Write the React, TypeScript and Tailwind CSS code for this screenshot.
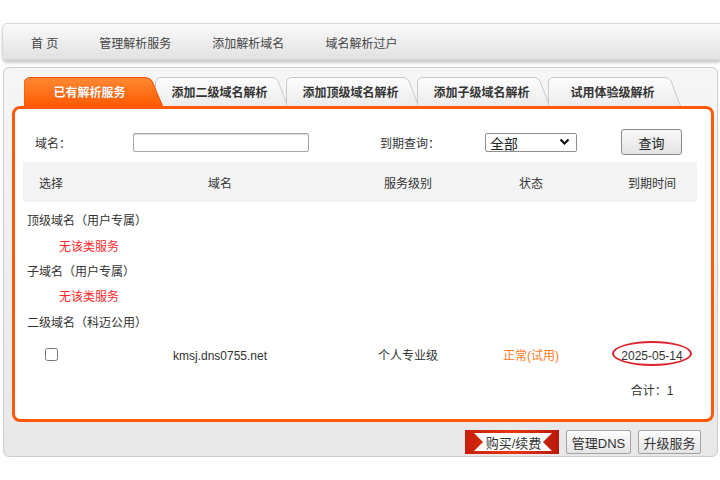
import React from 'react';

const navItems = ['首 页', '管理解析服务', '添加解析域名', '域名解析过户'];
const tabs = ['添加二级域名解析', '添加顶级域名解析', '添加子级域名解析', '试用体验级解析'];

function ActiveTab({ label }: { label: string }) {
  return (
    <div className="relative z-10 h-[30px] w-[139px] shrink-0">
      <svg className="absolute inset-0" width="139" height="30" viewBox="0 0 139 30">
        <defs>
          <linearGradient id="tabActive" x1="0" y1="0" x2="0" y2="1">
            <stop offset="0" stopColor="#ff8a33" />
            <stop offset="1" stopColor="#ff5800" />
          </linearGradient>
        </defs>
        <path d="M0 30 V7 Q0 0.5 7 0.5 H121 Q126 0.5 128 4 L139 30 Z" fill="url(#tabActive)" stroke="#f05000" strokeWidth="1" />
      </svg>
      <div className="relative flex h-[29px] items-center justify-center pr-[8px] pt-[3px] text-[12px] font-bold text-white [text-shadow:0_0_1px_rgba(160,50,0,0.6)]">
        {label}
      </div>
    </div>
  );
}

function Tab({ label, first }: { label: string; first?: boolean }) {
  return (
    <div className={first ? 'relative -ml-[8px] h-[29px] w-[133px] shrink-0' : 'relative -ml-[2px] h-[29px] w-[133px] shrink-0'}>
      <svg className="absolute inset-0" width="133" height="29" viewBox="0 0 133 29">
        <defs>
          <linearGradient id="tabIdle" x1="0" y1="0" x2="0" y2="1">
            <stop offset="0" stopColor="#fdfdfd" />
            <stop offset="1" stopColor="#ececec" />
          </linearGradient>
        </defs>
        <path d="M0.5 29 V6 Q0.5 0.5 6 0.5 H117 Q121 0.5 123 4 L132.5 29" fill="url(#tabIdle)" stroke="#c9c9c9" strokeWidth="1" />
      </svg>
      <div className="relative flex h-full items-center justify-center pr-[4px] pt-[3px] text-[12px] font-bold text-[#333]">
        {label}
      </div>
    </div>
  );
}

function GrayButton({ children, className }: { children: React.ReactNode; className: string }) {
  return (
    <div
      className={`flex h-[24px] items-center justify-center rounded-[2px] border border-[#a3a3a3] bg-linear-to-b from-[#fefefe] to-[#e4e4e4] pt-[3px] text-[13px] text-[#333] ${className}`}
    >
      {children}
    </div>
  );
}

function BuyButton() {
  return (
    <div className="relative flex h-[24px] w-[94px] items-center justify-center pt-[3px]">
      <svg className="absolute inset-0" width="94" height="24" viewBox="0 0 94 24">
        <defs>
          <linearGradient id="buyRed" x1="0" y1="0" x2="1" y2="0">
            <stop offset="0" stopColor="#c81e0a" />
            <stop offset="0.5" stopColor="#e8380f" />
            <stop offset="1" stopColor="#b8180a" />
          </linearGradient>
        </defs>
        <rect x="0" y="0" width="94" height="24" fill="url(#buyRed)" />
        <polygon points="9,3 87,3 78,12 87,21 9,21 18,12" fill="#fff" />
      </svg>
      <span className="relative pl-[3px] text-[13px] text-[#333]">购买/续费</span>
    </div>
  );
}

export default function App() {
  return (
    <div className="h-[480px] w-[720px] overflow-hidden bg-white font-[family-name:'Liberation_Sans','Noto_Sans_CJK_SC',sans-serif] text-[12px] leading-none text-[#333] [text-spacing-trim:space-all]">
      <div className="pl-[2px] pt-[23px]">
        <div className="flex h-[37px] items-center gap-[41px] rounded-l-[5px] border border-r-0 border-[#d8d8d8] bg-linear-to-b from-[#fafafa] to-[#e2e2e2] pl-[28px] pt-[5px] text-[12px] text-[#444] shadow-[0_3px_3px_rgba(0,0,0,0.2)]">
          {navItems.map((n) => (
            <span key={n}>{n}</span>
          ))}
        </div>
      </div>

      <div className="ml-[3px] mt-[7px] h-[390px] w-[715px] rounded-[6px] border border-[#cdcdcd] bg-linear-to-b from-[#f6f6f6] to-[#e8e8e8]">
        <div className="flex pl-[20px] pt-[9px]">
          <ActiveTab label="已有解析服务" />
          {tabs.map((t, i) => (
            <Tab key={t} label={t} first={i === 0} />
          ))}
        </div>

        <div className="relative z-20 -mt-px ml-[8px] h-[316px] w-[702px] rounded-[8px] border-[3px] border-[#ff5a0a] bg-white pt-[13px]">
          <div className="ml-[8px] w-[674px]">
            <div className="flex h-[40px] items-center">
              <span className="ml-[12px] w-[98px] pt-[4px]">域名：</span>
              <input className="h-[19px] w-[176px] rounded-[2px] border border-[#a5a5a5] bg-white shadow-[inset_0_1px_1px_rgba(0,0,0,0.15)] outline-none" />
              <span className="ml-[71px] w-[105px] pt-[4px]">到期查询：</span>
              <div className="flex h-[19px] w-[92px] items-center justify-between rounded-[2px] border border-[#8f8f8f] bg-white pl-[4px] pr-[6px] text-[14px] text-[#222]">
                <span className="pt-[3px]">全部</span>
                <svg width="11" height="8" viewBox="0 0 11 8">
                  <path d="M1.5 1.5 L5.5 5.5 L9.5 1.5" fill="none" stroke="#111" strokeWidth="2.2" />
                </svg>
              </div>
              <div className="ml-[44px] flex h-[26px] w-[61px] items-center justify-center rounded-[3px] border border-[#8a8a8a] bg-linear-to-b from-[#f9f9f9] to-[#e3e3e3] pt-[3px] text-[13px] text-[#222]">
                查询
              </div>
            </div>

            <div className="grid h-[40px] grid-cols-[56px_282px_94px_152px_1fr] items-center bg-[#f4f4f4] pt-[4px] text-center">
              <span>选择</span>
              <span>域名</span>
              <span>服务级别</span>
              <span>状态</span>
              <span>到期时间</span>
            </div>

            <div className="mt-[3px] flex h-[27px] items-center pl-[4px] pt-[4px] [font-feature-settings:'fwid']">顶级域名（用户专属）</div>
            <div className="flex h-[25px] items-center pl-[36px] pt-[4px] text-[#ff2a2a]">无该类服务</div>
            <div className="flex h-[25px] items-center pl-[4px] pt-[4px] [font-feature-settings:'fwid']">子域名（用户专属）</div>
            <div className="flex h-[26px] items-center pl-[36px] pt-[4px] text-[#ff2a2a]">无该类服务</div>
            <div className="flex h-[26px] items-center pl-[4px] pt-[4px] [font-feature-settings:'fwid']">二级域名（科迈公用）</div>

            <div className="grid h-[39px] grid-cols-[56px_282px_94px_152px_1fr] items-center pt-[4px] text-center">
              <div className="flex justify-center">
                <input type="checkbox" className="m-0 -mt-[2px] h-[13px] w-[13px]" />
              </div>
              <span>kmsj.dns0755.net</span>
              <span>个人专业级</span>
              <span className="text-[#ff7a22]">正常(试用)</span>
              <div className="relative flex justify-center">
                <span>2025-05-14</span>
                <div className="absolute left-1/2 top-1/2 h-[25px] w-[80px] -translate-x-1/2 -translate-y-[60%] rounded-[50%] border-2 border-[#e0202a]" />
              </div>
            </div>

            <div className="grid h-[32px] grid-cols-[56px_282px_94px_152px_1fr] items-center pt-[4px] text-center">
              <span className="col-start-5">合计：1</span>
            </div>
          </div>
        </div>

        <div className="mt-[8px] flex justify-end gap-[7px] pr-[16px]">
          <BuyButton />
          <GrayButton className="w-[65px]">管理DNS</GrayButton>
          <GrayButton className="w-[63px]">升级服务</GrayButton>
        </div>
      </div>
    </div>
  );
}
